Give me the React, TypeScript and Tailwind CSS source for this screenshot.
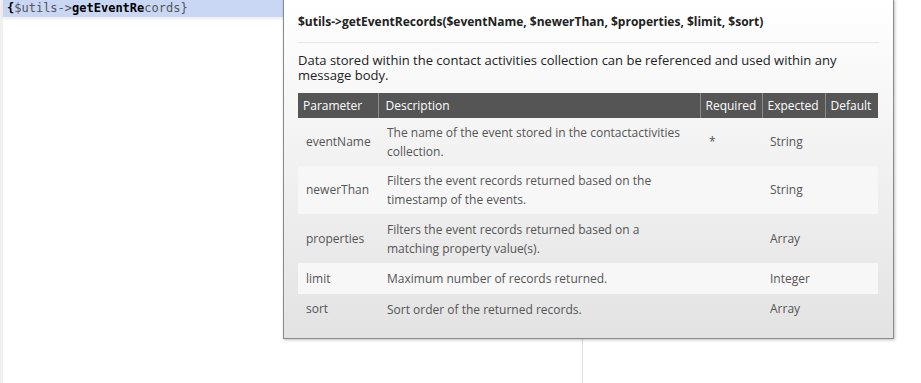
const rows = [
  { name: 'eventName', desc: 'The name of the event stored in the contactactivities collection.', req: '*', type: 'String', h: 'h-[48px]', alt: false },
  { name: 'newerThan', desc: 'Filters the event records returned based on the timestamp of the events.', req: '', type: 'String', h: 'h-[48px]', alt: true },
  { name: 'properties', desc: 'Filters the event records returned based on a matching property value(s).', req: '', type: 'Array', h: 'h-[49px]', alt: false },
  { name: 'limit', desc: 'Maximum number of records returned.', req: '', type: 'Integer', h: 'h-[31px]', alt: true },
  { name: 'sort', desc: 'Sort order of the returned records.', req: '', type: 'Array', h: 'h-[30px]', alt: false },
];

function HintPopup() {
  return (
    <div className="absolute left-[283px] top-[-1px] w-[611px] h-[340px] border border-[#8a8a8a] bg-gradient-to-b from-white to-[#e3e3e3] shadow-[1px_1px_3px_rgba(0,0,0,0.25)] px-[14px] font-['Open_Sans',sans-serif]">
      <div className="pt-[14px] pb-[12px] border-b border-[#e6e6e6] text-[12px] font-bold text-[#222] leading-[16px]">
        $utils-&gt;getEventRecords($eventName, $newerThan, $properties, $limit, $sort)
      </div>
      <p className="mt-[10px] text-[13px] leading-[15px] text-[#222] pr-[10px]">
        Data stored within the contact activities collection can be referenced and used within any message body.
      </p>
      <table className="mt-[10px] w-[580px] border-collapse text-[12px] text-[#555] table-fixed">
        <colgroup>
          <col className="w-[80px]" />
          <col className="w-[322px]" />
          <col className="w-[62px]" />
          <col className="w-[63px]" />
          <col className="w-[53px]" />
        </colgroup>
        <thead>
          <tr className="h-[25px] bg-[#555] text-white text-left">
            <th className="font-normal pl-[5px] border-r border-[#8a8a8a]">Parameter</th>
            <th className="font-normal pl-[7px] border-r border-[#8a8a8a]">Description</th>
            <th className="font-normal pl-[5px] border-r border-[#8a8a8a]">Required</th>
            <th className="font-normal pl-[5px] border-r border-[#8a8a8a]">Expected</th>
            <th className="font-normal pl-[5px]">Default</th>
          </tr>
        </thead>
        <tbody>
          {rows.map((r) => (
            <tr key={r.name} className={`${r.h} ${r.alt ? 'bg-[#f7f7f7]' : ''}`}>
              <td className="pl-[8px] align-middle">{r.name}</td>
              <td className="pl-[9px] pr-[8px] align-middle leading-[19px]">{r.desc}</td>
              <td className="pl-[9px] align-middle">{r.req}</td>
              <td className="pl-[8px] align-middle">{r.type}</td>
              <td></td>
            </tr>
          ))}
        </tbody>
      </table>
    </div>
  );
}

export default function App() {
  return (
    <div className="relative w-[921px] h-[383px] bg-white overflow-hidden">
      <div className="flex h-full">
        <div className="w-[3px] bg-[#f0f0f0]" />
        <div className="w-[580px] border-r border-[#e0e0e0]">
          <div className="h-[17px] w-[280px] bg-[#c9d7f5] pl-[4px] font-['DejaVu_Sans_Mono',monospace] text-[12px] leading-[16px] text-[#555] shadow-[0_2px_3px_rgba(0,0,0,0.08)]">
            <span className="font-bold text-black">{'{'}</span>
            $utils-&gt;<span className="font-bold text-black">getEventRe</span>cords{'}'}
          </div>
        </div>
      </div>
      <HintPopup />
    </div>
  );
}
